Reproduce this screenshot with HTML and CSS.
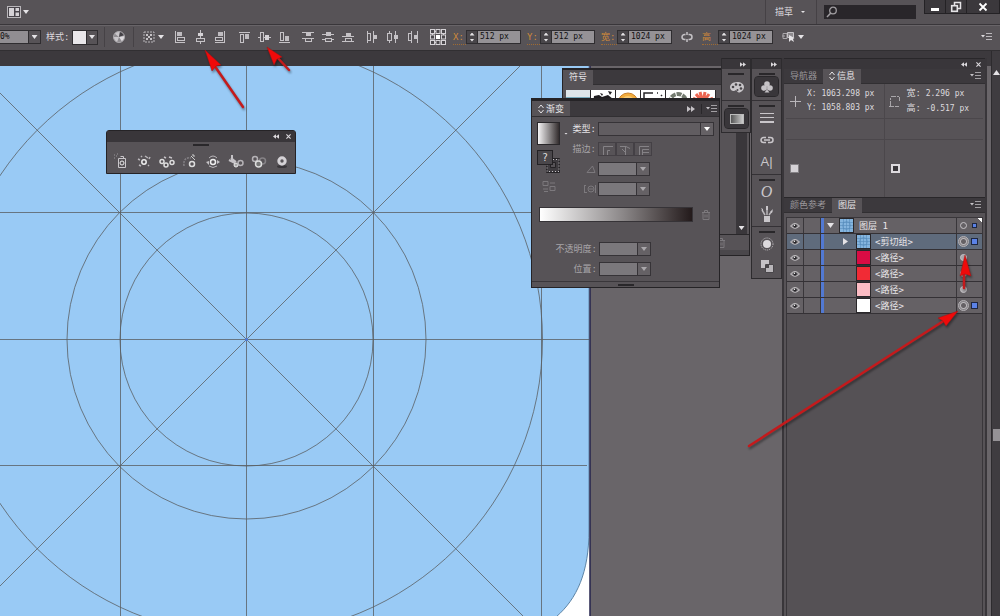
FILE: index.html
```html
<!DOCTYPE html>
<html lang="zh-CN">
<head>
    <meta charset="UTF-8">
    <meta name="viewport" content="width=device-width, initial-scale=1.0">
    <title>图标网格</title>
    <link rel="stylesheet" href="styles.css">
</head>
<body>

<!-- Shared icons -->
<svg class="defs" width="0" height="0" aria-hidden="true">
    <symbol id="i-menu" viewBox="0 0 12 10"><path d="M0 3h4L2 5.500z" fill="currentColor"/><path d="M5 1.500h6M5 4.500h6M5 7.500h6" stroke="currentColor" opacity=".75"/></symbol>
    <symbol id="i-collapse" viewBox="0 0 8 6"><path d="M0 0l4 3-4 3zM4 0l4 3-4 3z" fill="currentColor"/></symbol>
    <symbol id="i-close" viewBox="0 0 6 6"><path d="M.5.5l5 5M5.500.5l-5 5" stroke="currentColor" stroke-width="1.300"/></symbol>
    <symbol id="i-eye" viewBox="0 0 10 8"><path d="M.5 4Q5-1 9.500 4 5 8.500.5 4z" fill="#8a878b" stroke="#c5c2c5"/><circle cx="5" cy="4" r="1.800" fill="#252327"/><circle cx="4.500" cy="3.200" r=".7" fill="#fff"/></symbol>
    <symbol id="i-thumb" viewBox="0 0 13 13"><rect width="13" height="13" fill="#85b5de"/><path d="M3.500 0v13M6.500 0v13M9.500 0v13M0 3.500h13M0 6.500h13M0 9.500h13" stroke="#568cba" stroke-width=".6"/><circle cx="6.500" cy="6.500" r="4" fill="none" stroke="#568cba" stroke-width=".6"/></symbol>
    <symbol id="i-sort" viewBox="0 0 6 10"><path d="M.5 4L3 1l2.500 3M.5 6L3 9l2.500-3" fill="none" stroke="currentColor"/></symbol>
    <symbol id="i-trash" viewBox="0 0 10 10"><path d="M1 2.500h8M3.500 2V.5h3V2M2 3v6.500h6V3M4 4.500v3M6 4.500v3" fill="none" stroke="currentColor"/></symbol>
</svg>

<div class="app">
    <header class="titlebar">
        <button class="icon-btn layout-btn" aria-label="排列文档">
            <svg width="14" height="12"><rect x=".5" y=".5" width="13" height="11" fill="#48444a" stroke="#b9b6ba"/><path d="M2 2h5v8H2zM8.500 2H12v3H8.500zM8.500 6.500H12V10H8.500z" fill="#d5d2d6"/></svg>
            <i class="caret"></i>
        </button>
        <button class="icon-btn workspace-btn">描草 <i class="caret small"></i></button>
        <label class="search">
            <svg width="12" height="12"><circle cx="7" cy="4.500" r="3.300" fill="none" stroke="#a09da1" stroke-width="1.300"/><path d="M4.800 7L1 11" stroke="#a09da1" stroke-width="1.500"/></svg>
            <input type="search" aria-label="搜索">
        </label>
        <div class="window-btns">
            <button aria-label="最小化"><svg width="10" height="12"><path d="M1 7h8v3H1z" fill="#fff"/></svg></button>
            <button aria-label="还原"><svg width="12" height="12"><path d="M4.500 4V1.500h6v6H8" fill="none" stroke="#e5e3e6" stroke-width="1.500"/><rect x="1.700" y="4.700" width="5.600" height="5.600" fill="none" stroke="#e5e3e6" stroke-width="1.600"/></svg></button>
            <button aria-label="关闭"><svg width="10" height="10"><path d="M1.500 1.500l7 7M8.500 1.500l-7 7" stroke="#fff" stroke-width="1.800"/></svg></button>
        </div>
    </header>

    <div class="controlbar">
        <label class="combo opacity"><input type="text" value="0%" aria-label="不透明度"><button aria-label="展开"><i class="caret"></i></button></label>
        <span class="style-label">样式:</span>
        <button class="style-picker" aria-label="样式"><span class="style-swatch"></span><span class="drop-cell"><i class="caret"></i></span></button>
        <button class="icon-btn recolor" aria-label="重新着色">
            <svg width="14" height="14"><circle cx="7" cy="7" r="5.500" fill="#8f8c90"/><path d="M7 7L2.500 3.500A6 6 0 0 1 8 1.500zM7 7l-2 5.200A6 6 0 0 1 1.600 7z" fill="#c9c6ca"/><path d="M7 7L8 1.500A6 6 0 0 1 12.300 5z" fill="#444146"/><path d="M7 7l5.300-1A6 6 0 0 1 10 11.500z" fill="#dddade"/><circle cx="7" cy="7" r="5.500" fill="none" stroke="#aaa7ab"/></svg>
        </button>
        <button class="icon-btn align-to" aria-label="对齐">
            <svg width="12" height="12"><path d="M1 1h10v10H1z" fill="none" stroke="#b9b6ba" stroke-dasharray="2 1"/><path d="M3 3h2v2H3zM7 3h2v2H7zM5 5h2v2H5zM3 7h2v2H3zM7 7h2v2H7z" fill="#c5c2c6"/></svg>
            <i class="caret"></i>
        </button>

        <div class="align-group">
            <button aria-label="水平左对齐"><svg width="14" height="14"><path d="M2.500 1v12M3 12.500h9" stroke="#c5c2c6"/><rect x="4" y="2" width="5" height="4" fill="#bfbcc0"/><rect x="4.500" y="7.500" width="7" height="3" fill="none" stroke="#c5c2c6"/></svg></button>
            <button aria-label="水平居中对齐"><svg width="14" height="14"><path d="M7.500 0v14" stroke="#c5c2c6"/><rect x="5" y="3" width="5" height="3" fill="#d5d2d6"/><rect x="3.500" y="8.500" width="8" height="3" fill="#5a565a" stroke="#c5c2c6"/></svg></button>
            <button aria-label="水平右对齐"><svg width="14" height="14"><path d="M11.500 1v12M2 12.500h9" stroke="#c5c2c6"/><rect x="5" y="2" width="5" height="4" fill="#bfbcc0"/><rect x="2.500" y="7.500" width="7" height="3" fill="none" stroke="#c5c2c6"/></svg></button>
        </div>
        <div class="align-group">
            <button aria-label="垂直顶对齐"><svg width="14" height="14"><path d="M2 2.500h11" stroke="#c5c2c6"/><rect x="3.500" y="4.500" width="3" height="8" fill="none" stroke="#c5c2c6"/><rect x="8" y="4" width="4" height="5" fill="#bfbcc0"/></svg></button>
            <button aria-label="垂直居中对齐"><svg width="14" height="14"><path d="M1 7.500h13" stroke="#c5c2c6"/><rect x="3.500" y="2.500" width="3" height="9" fill="#5a565a" stroke="#c5c2c6"/><rect x="8" y="5" width="4" height="5" fill="#d5d2d6"/></svg></button>
            <button aria-label="垂直底对齐"><svg width="14" height="14"><path d="M2 12.500h11" stroke="#c5c2c6"/><rect x="3.500" y="2.500" width="3" height="8" fill="none" stroke="#c5c2c6"/><rect x="8" y="6" width="4" height="5" fill="#bfbcc0"/></svg></button>
        </div>
        <div class="align-group">
            <button aria-label="垂直顶分布"><svg width="14" height="14"><path d="M1 2.500h12M1 8.500h12" stroke="#c5c2c6"/><rect x="5" y="3" width="5" height="3" fill="#c5c2c6"/><rect x="4.500" y="8.500" width="6" height="3" fill="none" stroke="#c5c2c6"/></svg></button>
            <button aria-label="垂直居中分布"><svg width="14" height="14"><path d="M1 4.500h12M1 9.500h12" stroke="#c5c2c6"/><rect x="5" y="2" width="5" height="4" fill="#c5c2c6"/><rect x="4.500" y="8.500" width="6" height="3" fill="#5a565a" stroke="#c5c2c6"/></svg></button>
            <button aria-label="垂直底分布"><svg width="14" height="14"><path d="M1 6.500h12M1 11.500h12" stroke="#c5c2c6"/><rect x="5" y="3" width="5" height="3" fill="#c5c2c6"/><rect x="4.500" y="8.500" width="6" height="3" fill="none" stroke="#c5c2c6"/></svg></button>
        </div>
        <div class="align-group">
            <button aria-label="水平左分布"><svg width="14" height="14"><path d="M2.500 1v12M8.500 1v12" stroke="#c5c2c6"/><rect x="2.500" y="3.500" width="3" height="7" fill="none" stroke="#c5c2c6"/><rect x="9" y="5" width="3" height="4" fill="#c5c2c6"/></svg></button>
            <button aria-label="水平居中分布"><svg width="14" height="14"><path d="M4.500 1v12M10.500 1v12" stroke="#c5c2c6"/><rect x="2.500" y="3.500" width="4" height="7" fill="#5a565a" stroke="#c5c2c6"/><rect x="9" y="5" width="4" height="4" fill="#c5c2c6"/></svg></button>
            <button aria-label="水平右分布"><svg width="14" height="14"><path d="M6.500 1v12M12.500 1v12" stroke="#c5c2c6"/><rect x="3.500" y="3.500" width="3" height="7" fill="none" stroke="#c5c2c6"/><rect x="9" y="5" width="3" height="4" fill="#c5c2c6"/></svg></button>
        </div>

        <button class="icon-btn refpoint" aria-label="参考点">
            <svg width="16" height="16"><g fill="none" stroke="#d5d2d6"><path d="M3 2.500h10M3 13.500h10M2.500 3v10M13.500 3v10" stroke-dasharray="1 1"/><g fill="#4a474b"><rect x=".5" y=".5" width="4" height="4"/><rect x="6" y=".5" width="4" height="4"/><rect x="11.500" y=".5" width="4" height="4"/><rect x=".5" y="6" width="4" height="4"/><rect x="11.500" y="6" width="4" height="4"/><rect x=".5" y="11.500" width="4" height="4"/><rect x="6" y="11.500" width="4" height="4"/><rect x="11.500" y="11.500" width="4" height="4"/></g></g><rect x="6" y="6" width="4" height="4" fill="#fff"/></svg>
        </button>
        <label class="measure"><span>X:</span><span class="stepper"></span><input type="text" value="512 px"></label>
        <label class="measure"><span>Y:</span><span class="stepper"></span><input type="text" value="512 px"></label>
        <label class="measure size"><span>宽:</span><span class="stepper"></span><input type="text" value="1024 px"></label>
        <button class="icon-btn link-btn" aria-label="约束宽度和高度比例"><svg width="12" height="12"><path d="M4.500 3.500h-1a2.500 2.500 0 0 0 0 5h1M7.500 3.500h1a2.500 2.500 0 0 1 0 5h-1M6 1v3M6 8v3" fill="none" stroke="#c5c2c6" stroke-width="1.500"/></svg></button>
        <label class="measure size"><span>高</span><span class="stepper"></span><input type="text" value="1024 px"></label>
        <button class="icon-btn" aria-label="隔离选中的对象">
            <svg width="13" height="12"><path d="M0 5h3M1 2.500h4v5H1z" fill="none" stroke="#aaa7ab"/><path d="M5.500 1.500h6v5h-6z" fill="#8d8a8e" stroke="#c5c2c6"/><path d="M7 4v7l2-2 3 2-1-3 1.500-1z" fill="#e5e3e6"/></svg>
            <i class="caret"></i>
        </button>
        <button class="icon-btn bar-menu" aria-label="菜单"><svg width="12" height="10"><use href="#i-menu"/></svg></button>
    </div>

    <main class="workspace">
        <div class="document">
            <div class="doc-tabs"></div>
            <div class="canvas">
                <svg class="artboard" width="591" height="1100" fill="none">
                    <rect width="590" height="1100" fill="#fff"/>
                    <path d="M0 0H589V464C589 506 577 533 556 551Q500 640 400 640H0z" fill="#99caf5"/>
                    <path d="M589 0V464C589 506 577 533 556 551" stroke="#5c84a6"/>
                    <g stroke="#5a6063" stroke-width=".8">
                        <path d="M120.500 0v640M246.500 0v640M373.500 0v640M541.500 0v570M0 146.500h589M0 273.500h589M0 399.500h587"/>
                        <path d="M0 27L550 577M520 0L0 520"/>
                        <circle cx="246.500" cy="273.500" r="126.500"/>
                        <circle cx="246.500" cy="273.500" r="179.500"/>
                        <circle cx="246.500" cy="273.500" r="296"/>
                    </g>
                    <path d="M590 0v1100" stroke="#25234c" stroke-width="1.500"/>
                    <circle cx="246.500" cy="273.500" r="1.500" fill="#4c7be0"/>
                </svg>
            </div>
        </div>
        <div class="doc-scroll"><span class="scroll-up"></span><span class="scroll-thumb"></span></div>

        <!-- Symbol tools -->
        <section class="window tools-window">
            <div class="window-bar">
                <button aria-label="折叠"><svg class="flip" width="6" height="5"><use href="#i-collapse"/></svg></button>
                <button aria-label="关闭"><svg width="5" height="5"><use href="#i-close"/></svg></button>
            </div>
            <span class="grip"></span>
            <div class="tool-row">
                <button aria-label="符号喷枪"><svg width="16" height="16"><path d="M5.500 5.500h7v9h-7zM7.500 3.500h3v2" stroke="#c9c6ca" fill="none"/><circle cx="9" cy="10" r="2" fill="none" stroke="#eee"/><path d="M1 2h1M3 3h1M1 5h1M4 1h1" stroke="#9a979b"/></svg></button>
                <button aria-label="符号移位"><svg width="16" height="16"><circle cx="8" cy="9" r="2.200" fill="none" stroke="#eee" stroke-width="1.500"/><path d="M2 6l2 1M9 3l3 2M3 12l2 1M12 12l1 1M5 3l1 1M13 6l1-2" stroke="#b9b6ba" stroke-width="1.500"/></svg></button>
                <button aria-label="符号紧缩"><svg width="16" height="16"><g fill="none" stroke="#ddd" stroke-width="1.500"><circle cx="3" cy="8.500" r="2"/><circle cx="7" cy="12" r="2"/><circle cx="13" cy="9.500" r="2"/></g><path d="M5 4l2 1M10 4l3 1" stroke="#c5c2c6" stroke-width="1.500"/></svg></button>
                <button aria-label="符号缩放"><svg width="16" height="16"><path d="M2 13C1 7 4 4 9 5" fill="none" stroke="#858286" stroke-width="1.500" stroke-dasharray="2 1"/><path d="M9 3l4 4M10 2h2v2" stroke="#ccc" fill="none"/><circle cx="10" cy="11" r="2.500" fill="none" stroke="#ddd" stroke-width="1.500"/></svg></button>
                <button aria-label="符号旋转"><svg width="16" height="16"><circle cx="8" cy="9" r="2.500" fill="none" stroke="#eee" stroke-width="1.500"/><path d="M4 5Q8 1 12 5M4 13Q8 16 12 13" fill="none" stroke="#b9b6ba"/><path d="M1 9l3-1v4zM15 9l-3-2v4z" fill="#c5c2c6"/></svg></button>
                <button aria-label="符号着色"><svg width="16" height="16"><path d="M4 2v6M1 7l6 3M3 5l5 4" stroke="#c5c2c6" stroke-width="2"/><circle cx="8" cy="12" r="2" fill="#aaa" stroke="#eee"/><circle cx="12.500" cy="10" r="2.500" fill="none" stroke="#b5b2b6" stroke-width="1.500"/></svg></button>
                <button aria-label="符号滤色"><svg width="16" height="16"><circle cx="4" cy="6" r="2.500" fill="none" stroke="#b5b2b6" stroke-width="1.500"/><circle cx="11.500" cy="8" r="3" fill="none" stroke="#858286" stroke-width="1.500"/><circle cx="7.500" cy="11" r="3" fill="#777" stroke="#ddd" stroke-width="1.500"/></svg></button>
                <button aria-label="符号样式"><svg width="16" height="16"><ellipse cx="8" cy="13.500" rx="5" ry="1.500" fill="#39363a"/><circle cx="8" cy="8" r="3.200" fill="none" stroke="#d5d2d6" stroke-width="3"/></svg></button>
            </div>
        </section>

        <section class="window symbols-window">
            <div class="tabbar"><button class="tab active">符号</button></div>
            <div class="symbols-body">
                <div class="symbol-grid">
                    <button aria-label="渐变"><svg width="24" height="24"><rect width="24" height="24" fill="#dfe5ea"/><path d="M0 7h24v6H0z" fill="#79aabd"/></svg></button>
                    <button aria-label="墨迹"><svg width="24" height="24"><path d="M9 3l3 1-1 2zM17 1l4 1-2 3zM3 6l5-1 3 2 6-2 5 4v5H2z" fill="#1f1d20"/></svg></button>
                    <button aria-label="太阳"><svg width="24" height="24"><circle cx="12" cy="13" r="10" fill="#f2ac3c" stroke="#c9802a"/><circle cx="12" cy="13" r="7" fill="#f7ca75"/></svg></button>
                    <button aria-label="角线"><svg width="24" height="24"><path d="M3 12V3h9M16 3h1M20 5l1 1" stroke="#262427" fill="none" stroke-width="1.500"/></svg></button>
                    <button aria-label="花环"><svg width="24" height="24"><circle cx="12" cy="12" r="8" fill="none" stroke="#747b70" stroke-width="4" stroke-dasharray="5 1"/></svg></button>
                    <button aria-label="花朵"><svg width="24" height="24"><path d="M12 13L2 8M12 13L5 4M12 13L9 2M12 13l2-11M12 13l6-9M12 13l10-5" stroke="#ec6652" stroke-width="3"/></svg></button>
                </div>
                <div class="list-scroll"><i class="caret"></i></div>
            </div>
            <div class="symbols-foot"><svg width="10" height="10"><use href="#i-trash"/></svg></div>
        </section>

        <section class="window gradient-window">
            <div class="tabbar">
                <button class="tab active"><svg width="6" height="10"><use href="#i-sort"/></svg>渐变</button>
                <button class="bar-btn push" aria-label="展开"><svg width="8" height="6"><use href="#i-collapse"/></svg></button>
                <button class="bar-btn split" aria-label="菜单"><svg width="12" height="10"><use href="#i-menu"/></svg></button>
            </div>
            <div class="gradient-body">
                <div class="gradient-side">
                    <button class="gradient-swatch" aria-label="渐变填色"></button>
                    <i class="caret small"></i>
                    <svg class="fill-stroke" width="24" height="24"><path d="M9.500 13.500h5v-5h8v14h-13z" fill="#3f3c40" stroke="#242225"/><path d="M10 9.500h12v12H10z" fill="none" stroke="#c5c2c6" stroke-dasharray="1 2"/><path d="M13.500 12.500h5v5h-5z" fill="#575357" stroke="#242225"/><rect x=".5" y=".5" width="15" height="14" fill="#4a474b" stroke="#242225"/><text x="5" y="11">?</text></svg>
                    <svg class="reverse" width="14" height="12"><path d="M1 1.500h5v4H1zM8 6.500h5v4H8zM8 3h5M1 9h5M2 11.500h4" fill="none" stroke="#7c797d"/></svg>
                </div>
                <div class="gradient-form">
                    <label for="g-type" class="on">类型:</label>
                    <span class="drop wide"><select id="g-type"><option></option></select></span>
                    <span class="form-label">描边:</span>
                    <span class="stroke-btns">
                        <button aria-label="在描边中"><svg width="12" height="11"><path d="M2.500 11V2.500H12M6.500 11V6.500H9" fill="none" stroke="#858286"/></svg></button>
                        <button aria-label="沿描边"><svg width="12" height="11"><path d="M1 2.500h6l4 2M6.500 3v8M3 5l3 3" fill="none" stroke="#858286"/></svg></button>
                        <button aria-label="跨描边"><svg width="12" height="11"><path d="M2.500 11V2.500H12M5.500 11V5.500H12M5.500 8.500H12" fill="none" stroke="#858286"/></svg></button>
                    </span>
                    <label for="g-angle" aria-label="角度"><svg width="10" height="8"><path d="M1 7.500h8L6.500 1z" fill="none" stroke="#7c797d"/></svg></label>
                    <span class="drop"><select id="g-angle"><option></option></select></span>
                    <label for="g-ratio" aria-label="长宽比"><svg width="12" height="10"><path d="M.5 1v8M0 1.500h2M0 8.500h3M11.500 1v8" stroke="#7c797d"/><circle cx="7" cy="5" r="3" fill="none" stroke="#7c797d"/><path d="M5 5h4" stroke="#7c797d"/></svg></label>
                    <span class="drop"><select id="g-ratio"><option></option></select></span>
                </div>
            </div>
            <div class="ramp-row">
                <div class="ramp"></div>
                <svg width="10" height="10"><use href="#i-trash"/></svg>
            </div>
            <div class="gradient-form stop-form">
                <label for="g-opacity">不透明度:</label>
                <span class="drop"><select id="g-opacity"><option></option></select></span>
                <label for="g-pos">位置:</label>
                <span class="drop"><select id="g-pos"><option></option></select></span>
            </div>
            <div class="window-foot"><span class="grip"></span></div>
        </section>

        <!-- Right dock -->
        <aside class="dock">
            <div class="dock-col narrow">
                <div class="dock-bar"><svg width="6" height="5"><use href="#i-collapse"/></svg></div>
                <div class="dock-group">
                    <span class="grip"></span>
                    <button aria-label="颜色"><svg width="16" height="14"><path d="M8 2C3 2 1 5 1 7.500S4 12 6 10.500 8 12.500 10 12.500 15 10 15 7 12 2 8 2z" fill="#c9c6ca"/><g fill="#4a474b"><circle cx="4" cy="7" r="1.300"/><circle cx="7" cy="4.500" r="1.300"/><circle cx="11" cy="5" r="1.300"/><circle cx="12" cy="8.500" r="1.300"/><circle cx="8.500" cy="10" r="1"/></g></svg></button>
                </div>
                <div class="dock-group">
                    <span class="grip"></span>
                    <button class="pressed" aria-label="渐变"><span class="mini-ramp"></span></button>
                </div>
            </div>
            <div class="dock-col">
                <div class="dock-bar"><svg width="6" height="5"><use href="#i-collapse"/></svg></div>
                <div class="dock-group">
                    <span class="grip"></span>
                    <button class="pressed" aria-label="符号"><svg width="14" height="14"><g fill="#c5c2c6"><circle cx="7" cy="4" r="2.800"/><circle cx="4" cy="8" r="2.800"/><circle cx="10" cy="8" r="2.800"/><path d="M6.500 6h1v4l2 2.500h-5l2-2.500z"/></g></svg></button>
                </div>
                <div class="dock-group">
                    <span class="grip"></span>
                    <button aria-label="描边"><svg width="14" height="12"><path d="M0 1.500h14M0 5.500h14" stroke="#c9c6ca"/><path d="M0 10h14" stroke="#c9c6ca" stroke-width="2"/></svg></button>
                    <button aria-label="链接"><svg width="14" height="10"><path d="M6 2.500H3.500a2.500 2.500 0 0 0 0 5H6M8 2.500h2.500a2.500 2.500 0 0 1 0 5H8M4 5h6" fill="none" stroke="#c9c6ca" stroke-width="1.500"/></svg></button>
                    <button class="letter" aria-label="字符">A|</button>
                </div>
                <div class="dock-group">
                    <span class="grip"></span>
                    <button class="letter serif" aria-label="字形">O</button>
                    <button aria-label="画笔"><svg width="14" height="16"><path d="M5 9L2 4M7 9V2M9 9l3-4" stroke="#b9b6ba" stroke-width="1.500"/><path d="M1 2l2 1 0 3zM6 0h2v4H6zM13 3l-1 4-2-1z" fill="#c9c6ca"/><path d="M4 10h6v6H4z" fill="#c9c6ca"/></svg></button>
                </div>
                <div class="dock-group">
                    <span class="grip"></span>
                    <button aria-label="外观"><svg width="14" height="14"><circle cx="7" cy="7" r="6" fill="none" stroke="#c5c2c6" stroke-dasharray="1 1"/><circle cx="7" cy="7" r="4" fill="#dddade"/></svg></button>
                    <button aria-label="路径查找器"><svg width="14" height="14"><path d="M1 1h8v8H1z" fill="#c5c2c6"/><path d="M5.500 5.500h8v8h-8z" fill="#b9b6ba" stroke="#49464a"/><path d="M6 6h3v3H6z" fill="#49464a"/></svg></button>
                </div>
            </div>
            <div class="dock-panels">
                <div class="dock-bar wide">
                    <svg class="flip" width="6" height="5"><use href="#i-collapse"/></svg>
                    <svg width="5" height="5"><use href="#i-close"/></svg>
                </div>
                <div class="tabbar">
                    <button class="tab">导航器</button>
                    <button class="tab active"><svg width="6" height="10"><use href="#i-sort"/></svg>信息</button>
                    <button class="bar-btn push" aria-label="菜单"><svg width="12" height="10"><use href="#i-menu"/></svg></button>
                </div>
                <div class="info">
                    <div class="info-cell">
                        <svg width="12" height="12"><path d="M6.500 1v11M1 6.500h11" stroke="#b9b6ba"/></svg>
                        <div><p>X: 1063.298 px</p><p>Y: 1058.803 px</p></div>
                    </div>
                    <div class="info-cell">
                        <svg width="13" height="14"><path d="M2.500 12V4M3 2.500h8M11.500 3v4M1 12.500h10" fill="none" stroke="#a9a6aa" stroke-dasharray="5 1"/></svg>
                        <div><p><span>宽:</span> 2.296 px</p><p><span>高:</span> -0.517 px</p></div>
                    </div>
                    <div class="info-cell blank"></div>
                    <div class="info-cell blank"></div>
                    <div class="info-cell paint"><span class="paint-fill"></span></div>
                    <div class="info-cell paint"><span class="paint-stroke"></span></div>
                </div>
                <div class="tabbar">
                    <button class="tab">颜色参考</button>
                    <button class="tab active">图层</button>
                    <button class="bar-btn push" aria-label="菜单"><svg width="12" height="10"><use href="#i-menu"/></svg></button>
                </div>
                <ul class="layers">
                    <li class="layer current">
                        <button class="eye" aria-label="可见"><svg width="10" height="8"><use href="#i-eye"/></svg></button><span class="lock"></span>
                        <span class="name"><i class="caret big"></i><svg class="thumb" width="13" height="13"><use href="#i-thumb"/></svg>图层 1</span>
                        <span class="target"><b class="ring"></b><b class="sel small"></b></span>
                    </li>
                    <li class="layer selected">
                        <button class="eye" aria-label="可见"><svg width="10" height="8"><use href="#i-eye"/></svg></button><span class="lock"></span>
                        <span class="name child"><i class="caret side"></i><svg class="thumb" width="13" height="13"><use href="#i-thumb"/></svg>&lt;剪切组&gt;</span>
                        <span class="target"><b class="ring double"></b><b class="sel"></b></span>
                    </li>
                    <li class="layer">
                        <button class="eye" aria-label="可见"><svg width="10" height="8"><use href="#i-eye"/></svg></button><span class="lock"></span>
                        <span class="name path"><span class="thumb crimson"></span>&lt;路径&gt;</span>
                        <span class="target"><b class="ring full"></b></span>
                    </li>
                    <li class="layer">
                        <button class="eye" aria-label="可见"><svg width="10" height="8"><use href="#i-eye"/></svg></button><span class="lock"></span>
                        <span class="name path"><span class="thumb red"></span>&lt;路径&gt;</span>
                        <span class="target"><b class="ring full"></b></span>
                    </li>
                    <li class="layer">
                        <button class="eye" aria-label="可见"><svg width="10" height="8"><use href="#i-eye"/></svg></button><span class="lock"></span>
                        <span class="name path"><span class="thumb pink"></span>&lt;路径&gt;</span>
                        <span class="target"><b class="ring full"></b></span>
                    </li>
                    <li class="layer">
                        <button class="eye" aria-label="可见"><svg width="10" height="8"><use href="#i-eye"/></svg></button><span class="lock"></span>
                        <span class="name path"><span class="thumb white"></span>&lt;路径&gt;</span>
                        <span class="target"><b class="ring double"></b><b class="sel"></b></span>
                    </li>
                </ul>
            </div>
        </aside>
    </main>

    <!-- Red pointer arrows over the interface -->
    <svg class="pointers" width="1000" height="616">
        <g stroke="#c41a1c" stroke-width="2.500" stroke-linecap="round">
            <path d="M243 107L214 65M289 70L276 56M964 288V272M749 446L945 320"/>
        </g>
        <g fill="#f00a0a" stroke="#a01416" stroke-width=".5">
            <path d="M205 50l16 15-5 1-4 5z"/>
            <path d="M267 47l15 10-5 2-3 6z"/>
            <path d="M965 255l6 21-6-2-5 2z"/>
            <path d="M958 311l-12 15-3-5-5-3z"/>
        </g>
    </svg>
</div>

</body>
</html>
```
FILE: styles.css
```css
* {
    box-sizing: border-box;
}
body {
    margin: 0;
    background-color: #696569;
    color: #dddade;
    font-family: "DejaVu Sans Mono", "Noto Sans CJK SC", monospace;
    font-size: 9px;
    line-height: 14px;
}
button, input, select {
    font: inherit;
    color: inherit;
    margin: 0;
    padding: 0;
    border: 0;
    border-radius: 0;
    background: none;
}
button {
    display: flex;
    align-items: center;
    justify-content: center;
}
p, ul {
    margin: 0;
    padding: 0;
    list-style: none;
}
svg {
    display: block;
    flex: none;
}
.defs {
    position: absolute;
}
.app {
    position: relative;
    display: flex;
    flex-direction: column;
    height: 100vh;
    overflow: hidden;
}
.caret {
    flex: none;
    width: 6px;
    height: 4px;
    background-color: #e5e3e6;
    clip-path: polygon(0 0, 100% 0, 50% 100%);
}
.caret.small {
    width: 4px;
    height: 2px;
}
.caret.big {
    width: 7px;
    height: 5px;
}
.caret.side {
    width: 5px;
    height: 7px;
    clip-path: polygon(0 0, 100% 50%, 0 100%);
}
.flip {
    transform: scaleX(-1);
}
.grip {
    display: block;
    width: 16px;
    height: 2px;
    margin: 0 auto;
    background-color: #29272a;
}
.icon-btn {
    gap: 3px;
}

/* title bar */
.titlebar {
    display: flex;
    align-items: flex-start;
    height: 25px;
    flex: none;
    background-color: #575357;
    border-bottom: 1px solid #39363a;
}
.layout-btn {
    gap: 2px;
    margin: 6px auto 0 7px;
}
.workspace-btn {
    gap: 8px;
    height: 24px;
    padding: 0 11px 0 9px;
    border-left: 1px solid #454145;
    border-right: 1px solid #454145;
}
.search {
    display: flex;
    align-items: center;
    width: 92px;
    height: 14px;
    margin: 5px 8px 0 7px;
    padding: 0 2px;
    background-color: #29262a;
}
.search input {
    width: 100%;
    min-width: 0;
}
.window-btns {
    display: flex;
    height: 14px;
    background-color: #3b383c;
    border: 1px solid #242225;
    border-top: 0;
}
.window-btns button {
    width: 21px;
    border-right: 1px solid #242225;
}
.window-btns button:last-child {
    width: 32px;
    border-right: 0;
}

/* control bar */
.controlbar {
    display: flex;
    align-items: center;
    height: 26px;
    flex: none;
    padding: 0 7px 2px 0;
    background-color: #575357;
    border-top: 1px solid #686468;
    border-bottom: 1px solid #312f32;
}
.combo {
    display: flex;
    height: 14px;
    border: 1px solid #2f2d30;
    border-left: 0;
}
.combo input {
    width: 28px;
    background-color: #918e92;
    color: #111;
    font-size: 8px;
}
.combo button {
    width: 12px;
    border-left: 1px solid #2f2d30;
}
.style-label {
    margin: 0 2px 0 5px;
    width: 24px;
    white-space: nowrap;
}
.style-picker {
    height: 15px;
    border: 1px solid #2f2d30;
}
.style-swatch {
    width: 13px;
    height: 13px;
    background-color: #e9e7ea;
}
.drop-cell {
    display: flex;
    align-items: center;
    justify-content: center;
    width: 11px;
    height: 13px;
    border-left: 1px solid #2f2d30;
}
.recolor {
    margin-left: 6px;
    padding: 0 7px;
    height: 20px;
    border-left: 1px solid #464246;
    border-right: 1px solid #464246;
}
.align-to {
    margin: 0 8px 0 9px;
}
.align-group {
    display: flex;
    gap: 4px;
    margin-right: 8px;
}
.align-group button {
    width: 16px;
    height: 16px;
}
.refpoint {
    margin: 0 7px 0 2px;
}
.measure {
    display: flex;
    align-items: center;
    height: 14px;
    margin-right: 6px;
}
.measure span:first-child {
    width: 13px;
    color: #d08a3a;
    white-space: nowrap;
    border-bottom: 1px dotted #a06b31;
}
.measure.size {
    margin-right: 9px;
}
.measure.size span:first-child {
    width: 16px;
}
.measure input {
    width: 44px;
    height: 14px;
    padding-left: 2px;
    background-color: #959296;
    border: 1px solid #2f2d30;
    color: #111;
    font-size: 8px;
}
.stepper {
    display: grid;
    align-content: center;
    justify-content: center;
    gap: 3px;
    width: 11px;
    height: 14px;
    background-color: #49464a;
    border: 1px solid #2f2d30;
    border-right: 0;
}
.stepper::before, .stepper::after {
    content: "";
    width: 5px;
    height: 3px;
    background-color: #e5e3e6;
    clip-path: polygon(50% 0, 100% 100%, 0 100%);
}
.stepper::after {
    clip-path: polygon(0 0, 100% 0, 50% 100%);
}
.link-btn {
    margin-right: 9px;
}
.bar-menu {
    margin-left: auto;
}

/* workspace */
.workspace {
    position: relative;
    display: flex;
    flex: 1;
    min-height: 0;
}
.document {
    display: flex;
    flex-direction: column;
    flex: 1;
    min-width: 0;
}
.doc-tabs {
    height: 15px;
    flex: none;
    background-color: #3c393d;
}
.canvas {
    flex: 1;
    min-height: 0;
    overflow: hidden;
}
.doc-scroll {
    display: flex;
    flex-direction: column;
    align-items: flex-end;
    justify-content: space-between;
    width: 9px;
    padding: 19px 0 175px;
    background-color: #3f3c40;
    border-left: 1px solid #2d2b2e;
}
.scroll-up {
    width: 7px;
    height: 5px;
    background-color: #e5e3e6;
    clip-path: polygon(50% 0, 100% 100%, 0 100%);
}
.scroll-thumb {
    width: 7px;
    height: 12px;
    background-color: #959296;
}

/* floating windows */
.window {
    position: absolute;
    background-color: #575357;
    border: 1px solid #252326;
}
.tabbar {
    display: flex;
    align-items: center;
    height: 15px;
    background-color: #3c393d;
    border-bottom: 1px solid #312f32;
}
.tab {
    gap: 2px;
    height: 15px;
    padding: 0 6px;
    color: #9a979b;
    white-space: nowrap;
}
.tab.active {
    background-color: #575357;
    color: #e5e3e6;
}
.bar-btn {
    height: 10px;
    padding: 0 3px;
    color: #c5c2c6;
}
.bar-btn.push {
    margin-left: auto;
}
.bar-btn.split {
    margin-left: 3px;
    padding: 0 1px 0 4px;
    border-left: 1px solid #29272a;
}
.tools-window {
    left: 106px;
    top: 79px;
    width: 190px;
    border-radius: 3px 3px 0 0;
}
.window-bar {
    display: flex;
    justify-content: flex-end;
    align-items: center;
    gap: 7px;
    height: 11px;
    padding-right: 4px;
    background-color: #39363a;
}
.tools-window .grip {
    margin-top: 2px;
}
.tool-row {
    display: flex;
    justify-content: space-between;
    padding: 7px 5px 4px 6px;
}
.symbols-window {
    left: 562px;
    top: 17px;
    width: 188px;
    border-top-width: 2px;
}
.symbols-body {
    display: flex;
    height: 150px;
    padding: 5px 2px 0 3px;
    border-bottom: 1px solid #29272a;
}
.symbol-grid {
    display: flex;
    align-items: flex-start;
    flex: 1;
    gap: 1px;
    overflow: hidden;
}
.symbol-grid button {
    background-color: #fff;
    outline: 1px solid #29272a;
}
.list-scroll {
    display: flex;
    justify-content: center;
    align-items: flex-end;
    width: 11px;
    padding-bottom: 4px;
    background-color: #3a373b;
}
.symbols-foot {
    display: flex;
    align-items: center;
    height: 20px;
    padding-left: 153px;
    color: #7c797d;
    border-bottom: 5px solid #4a474b;
}
.gradient-window {
    left: 531px;
    top: 47px;
    width: 189px;
    border-top-width: 3px;
}
.gradient-window .tabbar {
    height: 16px;
}
.gradient-body {
    display: flex;
    padding: 5px 5px 0;
}
.gradient-side {
    display: grid;
    grid-template-columns: 23px 6px;
    align-items: center;
    align-content: start;
    gap: 5px 4px;
    width: 36px;
}
.gradient-swatch {
    height: 23px;
    border: 1px solid #29272a;
    background-image: linear-gradient(to right, #f5f4f5, #332d2e);
}
.fill-stroke, .reverse {
    grid-column: 1 / 3;
}
.fill-stroke text {
    fill: #ddd;
    font-size: 10px;
}
.reverse {
    margin: 1px 0 0 5px;
}
.gradient-form {
    display: grid;
    grid-template-columns: 24px 1fr;
    align-items: center;
    gap: 6px 2px;
    flex: 1;
    color: #a7a4a8;
}
.gradient-form label, .form-label {
    display: flex;
    justify-content: flex-end;
    white-space: nowrap;
}
.gradient-form .on {
    color: #e5e3e6;
}
.drop {
    position: relative;
    display: flex;
    width: 52px;
    height: 14px;
    background-color: #7b787c;
    border: 1px solid #363337;
}
.drop.wide {
    width: 116px;
    background-color: #615d61;
}
.drop select {
    width: 100%;
    appearance: none;
}
.drop::before {
    content: "";
    position: absolute;
    top: 0;
    right: 0;
    width: 12px;
    height: 12px;
    border-left: 1px solid #363337;
    background-color: #656165;
    pointer-events: none;
}
.drop::after {
    content: "";
    position: absolute;
    top: 4px;
    right: 3px;
    width: 6px;
    height: 4px;
    background-color: #aaa7ab;
    clip-path: polygon(0 0, 100% 0, 50% 100%);
    pointer-events: none;
}
.drop.wide::after {
    background-color: #fff;
}
.stroke-btns {
    display: flex;
    height: 14px;
}
.stroke-btns button {
    width: 18px;
    border: 1px solid #444045;
}
.ramp-row {
    display: flex;
    align-items: center;
    justify-content: space-between;
    padding: 11px 8px 0 7px;
    color: #7c797d;
}
.ramp {
    width: 154px;
    height: 15px;
    border: 1px solid #363337;
    background-image: linear-gradient(to right, #fff, #8a8687 55%, #231a1b);
}
.stop-form {
    grid-template-columns: 60px 1fr;
    padding: 20px 5px 5px;
}
.window-foot {
    height: 6px;
    padding-top: 2px;
    border-top: 1px solid #39363a;
}

/* dock on the right */
.dock {
    position: absolute;
    top: 7px;
    right: 13px;
    bottom: 0;
    display: flex;
    align-items: flex-start;
}
.dock-col {
    width: 31px;
    background-color: #575357;
    border: 1px solid #2d2b2e;
    border-width: 0 1px 1px;
}
.dock-col.narrow {
    width: 30px;
}
.dock-bar {
    display: flex;
    align-items: center;
    justify-content: flex-end;
    gap: 9px;
    height: 11px;
    padding-right: 4px;
    background-color: #39363a;
    border-top: 1px solid #29272a;
}
.dock-group {
    padding: 4px 3px 2px;
    border-bottom: 1px solid #343135;
}
.dock-group:last-child {
    border-bottom: 0;
}
.dock-group button {
    width: 23px;
    height: 20px;
    margin: 2px auto 0;
}
.dock-group .grip + button {
    margin-top: 1px;
}
.dock-group .pressed, .narrow button {
    height: 19px;
    margin-bottom: 2px;
}
.dock-group .grip + .pressed, .narrow .grip + button {
    margin-top: 2px;
}
.pressed {
    background-color: #39363a;
    outline: 1px solid #29272a;
    border-radius: 3px;
}
.mini-ramp {
    width: 14px;
    height: 10px;
    border: 1px solid #bbb;
    background-image: linear-gradient(to right, #555, #ccc);
}
.letter {
    font-family: "Liberation Sans", sans-serif;
    font-size: 13px;
    color: #c9c6ca;
}
.letter.serif {
    font-family: "Liberation Serif", serif;
    font-size: 16px;
    font-style: italic;
}
.dock-panels {
    align-self: stretch;
    display: flex;
    flex-direction: column;
    width: 205px;
    background-color: #575357;
    border-left: 2px solid #39363a;
    border-right: 2px solid #39363a;
}
.info {
    display: grid;
    grid-template-columns: minmax(0, 1fr) minmax(0, 1fr);
    grid-template-rows: 35px 21px 57px;
    padding: 0 2px;
    border-bottom: 1px solid #29272a;
    font-size: 8px;
}
.info-cell {
    display: flex;
    align-items: center;
    gap: 6px;
    padding-left: 3px;
    white-space: nowrap;
    border-bottom: 1px solid #4b474b;
}
.info-cell p span {
    font-size: 9px;
}
.info-cell:nth-child(odd) {
    border-right: 1px solid #4b474b;
}
.info-cell.paint {
    padding-left: 4px;
    border-bottom: 0;
}
.paint-fill, .paint-stroke {
    width: 9px;
    height: 9px;
    border: 1px solid #858286;
    background-color: #d5d2d6;
}
.paint-stroke {
    margin-left: 2px;
    border: 2px solid #dddade;
    background-color: #39363a;
}
.layers {
    flex: 1;
    margin: 4px 2px 0;
    border: 1px solid #39363a;
    border-bottom: 0;
    background-color: #555155;
}
.layer {
    display: grid;
    grid-template-columns: 16px 18px 1fr 26px;
    height: 16px;
    background-color: #656165;
    border-bottom: 1px solid #343135;
    color: #e9e7ea;
}
.layer.selected {
    background-color: #5f6b7c;
}
.lock {
    border-left: 1px solid #39363a;
    border-right: 1px solid #39363a;
}
.name {
    display: flex;
    align-items: center;
    gap: 5px;
    padding-left: 3px;
    border-left: 3px solid #5279d2;
    white-space: nowrap;
}
.name.child {
    padding-left: 19px;
}
.name.path {
    padding-left: 32px;
}
.name.child .thumb {
    margin: 0 -1px 0 3px;
}
.name .thumb {
    width: 15px;
    height: 15px;
    border: 1px solid #29272a;
}
.name.path .thumb {
    margin-right: -1px;
}
.crimson {
    background-color: #d90c44;
}
.red {
    background-color: #f12b35;
}
.pink {
    background-color: #fcbcc4;
}
.white {
    background-color: #fff;
}
.target {
    display: flex;
    align-items: center;
    gap: 4px;
    padding-left: 3px;
    border-left: 1px solid #39363a;
}
.current .target {
    background-image: linear-gradient(225deg, #fff 3px, transparent 3px);
}
.ring {
    width: 7px;
    height: 7px;
    border: 1px solid #c5c2c6;
    border-radius: 50%;
}
.ring.full {
    background-color: #aaa7ab;
}
.ring.double {
    width: 11px;
    height: 11px;
    margin: 0 -2px;
    border: 1px solid #b5b2b6;
    background-image: radial-gradient(#656165 2px, #bbb8bc 3px, #858286 4px);
}
.sel {
    width: 7px;
    height: 7px;
    background-color: #5b82e6;
    border: 1px solid #1e2740;
}
.sel.small {
    width: 5px;
    height: 5px;
    margin-left: 1px;
}

/* pointer arrows */
.pointers {
    position: absolute;
    top: 0;
    left: 0;
    pointer-events: none;
    filter: drop-shadow(1px 2px 1px rgba(0, 0, 0, 0.4));
}
```
